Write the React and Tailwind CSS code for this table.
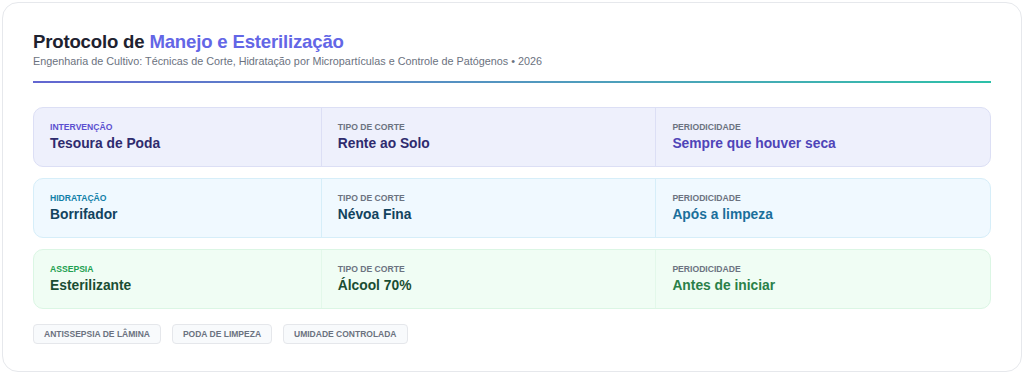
import React from "react";

const rows = [
  {
    label: "INTERVENÇÃO",
    title: "Tesoura de Poda",
    cut: "Rente ao Solo",
    period: "Sempre que houver seca",
    box: "bg-[#eef0fc] border-[#dcdff5]",
    div: "border-[#dcdff5]",
    labelC: "text-[#5b4fd0]",
    valC: "text-[#2f2b6e]",
    perC: "text-[#4f44b8]",
  },
  {
    label: "HIDRATAÇÃO",
    title: "Borrifador",
    cut: "Névoa Fina",
    period: "Após a limpeza",
    box: "bg-[#f0f9ff] border-[#d6eef9]",
    div: "border-[#d6eef9]",
    labelC: "text-[#1180a8]",
    valC: "text-[#12435e]",
    perC: "text-[#1a6f9b]",
  },
  {
    label: "ASSEPSIA",
    title: "Esterilizante",
    cut: "Álcool 70%",
    period: "Antes de iniciar",
    box: "bg-[#f0fdf4] border-[#dbf6e4]",
    div: "border-[#e3f8ea]",
    labelC: "text-[#20a050]",
    valC: "text-[#1a4d33]",
    perC: "text-[#2a8048]",
  },
];

function Cell({ label, value, labelC, valC, className }) {
  return (
    <div className={"flex flex-col justify-center px-4 " + className}>
      <div className={"text-[8.6px] leading-[12px] font-bold " + labelC}>{label}</div>
      <div className={"mt-[2px] text-[13.8px] leading-[18px] font-bold " + valC}>{value}</div>
    </div>
  );
}

export default function App() {
  return (
    <div className="w-[1024px] h-[374px] bg-white p-[2px]" style={{ fontFamily: '"Liberation Sans", Arial, sans-serif' }}>
      <div className="h-full rounded-[16px] border border-[#e6e8ec] bg-white px-[30px] pt-[28px]">
        <h1 className="text-[18.6px] leading-[22px] font-bold text-[#1e2230] tracking-[-0.01em]">
          Protocolo de <span className="text-[#6366e6]">Manejo e Esterilização</span>
        </h1>
        <p className="mt-[1px] text-[10.8px] leading-[14px] text-[#6b7280]">
          Engenharia de Cultivo: Técnicas de Corte, Hidratação por Micropartículas e Controle de Patógenos • 2026
        </p>
        <div className="mt-[13px] h-[2px] bg-gradient-to-r from-[#6366d1] to-[#2cc0a8]" />
        <div className="mt-[24px] flex flex-col gap-[11px]">
          {rows.map((r) => (
            <div key={r.label} className={"flex h-[60px] rounded-[10px] border " + r.box}>
              <Cell className="w-[30%]" label={r.label} value={r.title} labelC={r.labelC} valC={r.valC} />
              <Cell className={"w-[35%] border-l " + r.div} label="TIPO DE CORTE" value={r.cut} labelC="text-[#6b7280]" valC={r.valC} />
              <Cell className={"flex-1 border-l " + r.div} label="PERIODICIDADE" value={r.period} labelC="text-[#6b7280]" valC={r.perC} />
            </div>
          ))}
        </div>
        <div className="mt-[15px] flex gap-[11px]">
          {["ANTISSEPSIA DE LÂMINA", "PODA DE LIMPEZA", "UMIDADE CONTROLADA"].map((t) => (
            <span key={t} className="rounded-[4px] border border-[#e5e7eb] bg-[#f8fafc] px-[10px] h-[20px] flex items-center text-[8.5px] font-bold text-[#6b7280]">
              {t}
            </span>
          ))}
        </div>
      </div>
    </div>
  );
}
